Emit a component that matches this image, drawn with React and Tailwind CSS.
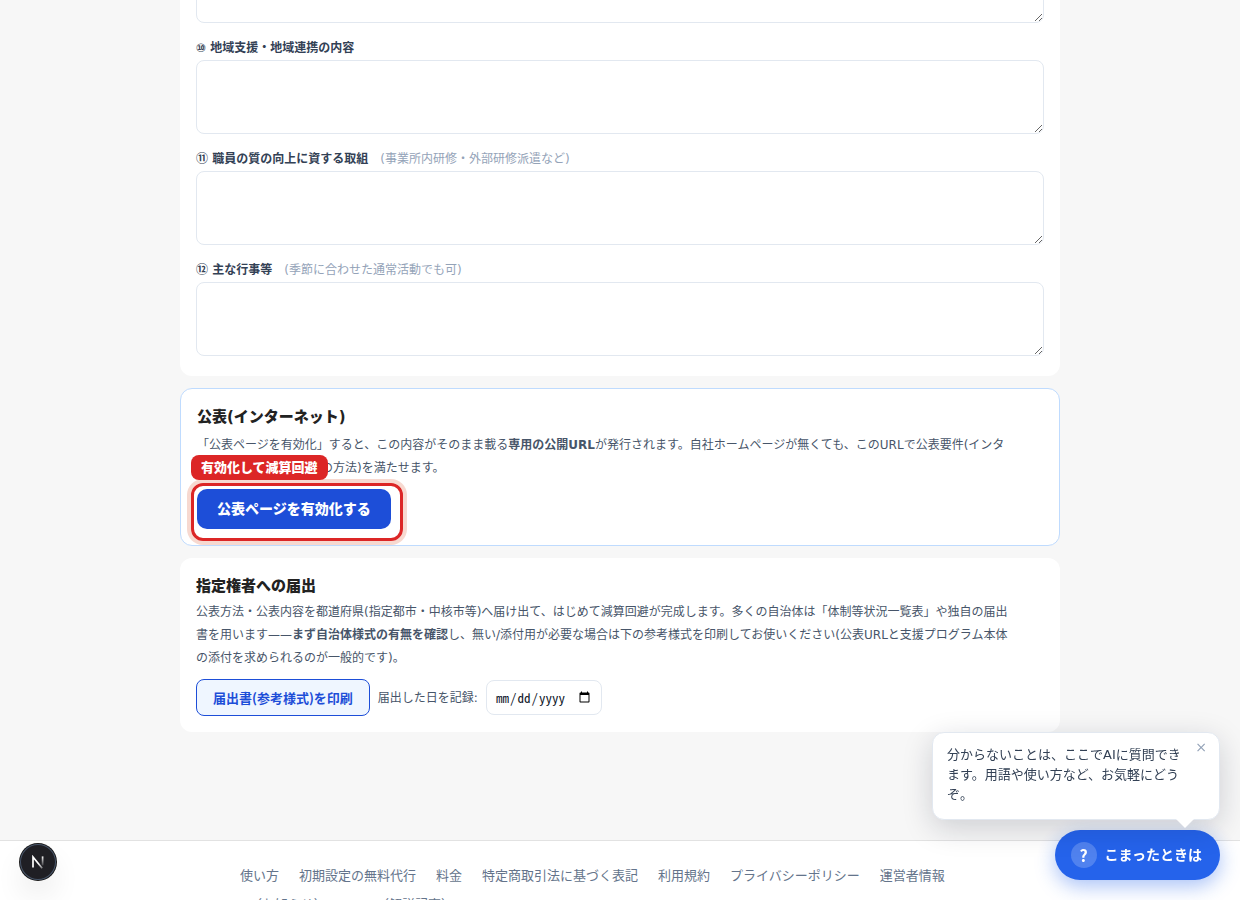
const fields = [
  { id: "f10", no: "⑩", title: "地域支援・地域連携の内容" },
  { id: "f11", no: "⑪", title: "職員の質の向上に資する取組", hint: "(事業所内研修・外部研修派遣など)" },
  { id: "f12", no: "⑫", title: "主な行事等", hint: "(季節に合わせた通常活動でも可)" },
];

const links = [
  "使い方",
  "初期設定の無料代行",
  "料金",
  "特定商取引法に基づく表記",
  "利用規約",
  "プライバシーポリシー",
  "運営者情報",
  "X（お知らせ）",
  "note（解説記事）",
];

function TextArea(props) {
  return (
    <textarea
      {...props}
      className="block h-[74px] w-full resize-y rounded-lg border border-[#e2e8f0] bg-white px-3 py-2 text-sm"
    />
  );
}

function Field({ id, no, title, hint }) {
  return (
    <div className="flex flex-col">
      <label htmlFor={id} className="mb-0.5 text-xs leading-5 font-bold text-[#334155]">
        {no} {title}
        {hint && <span className="font-normal text-[#94a3b8]">{"　"}{hint}</span>}
      </label>
      <TextArea id={id} />
    </div>
  );
}

function NextBadge() {
  return (
    <button
      type="button"
      aria-label="開発ツール"
      className="fixed bottom-5 left-5 flex size-9 items-center justify-center rounded-full bg-[#1f1f24] shadow-[0_0_0_1px_#171717,inset_0_0_0_1px_#475569,0_16px_32px_-8px_rgba(0,0,0,0.24)]"
    >
      <svg width="14" height="14" viewBox="0 0 14 14" fill="none" aria-hidden="true">
        <defs>
          <linearGradient id="diag" x1="8" y1="8" x2="12.5" y2="13.5" gradientUnits="userSpaceOnUse">
            <stop stopColor="#fff" />
            <stop offset="1" stopColor="#fff" stopOpacity="0.3" />
          </linearGradient>
          <linearGradient id="stem" x1="11" y1="1" x2="11" y2="11" gradientUnits="userSpaceOnUse">
            <stop stopColor="#fff" />
            <stop offset="1" stopColor="#fff" stopOpacity="0.1" />
          </linearGradient>
        </defs>
        <path d="M2 12.5V2L11.2 13.2" stroke="url(#diag)" strokeWidth="1.7" />
        <path d="M11.6 1.4V10.4" stroke="url(#stem)" strokeWidth="1.7" />
      </svg>
    </button>
  );
}

function HelpWidget() {
  return (
    <div className="fixed right-5 bottom-5 flex flex-col items-end gap-2.5">
      <div className="relative w-72 rounded-xl border border-[#e2e8f0] bg-white pt-3 pr-9 pb-3.5 pl-3.5 shadow-[0_8px_30px_rgba(15,23,42,0.18)]">
        <p className="text-[13px] leading-5 text-[#334155]">
          分からないことは、ここでAIに質問できます。用語や使い方など、お気軽にどうぞ。
        </p>
        <button
          type="button"
          aria-label="閉じる"
          className="absolute top-1 right-2 flex size-5 items-center justify-center text-sm text-[#94a3b8]"
        >
          ×
        </button>
        <svg className="absolute right-6 -bottom-[9px]" width="20" height="10" viewBox="0 0 20 10" aria-hidden="true">
          <path d="M0 0H20L10 10Z" fill="#fff" />
        </svg>
      </div>
      <button
        type="button"
        className="flex h-[50px] items-center gap-2 rounded-full bg-[#2563eb] pr-[18px] pl-4 text-sm font-bold text-white shadow-[0_6px_20px_rgba(37,99,235,0.4)]"
      >
        <span className="flex size-[26px] items-center justify-center rounded-full bg-white/20 font-['Noto_Sans_CJK_JP'] text-base leading-5">
          ?
        </span>
        こまったときは
      </button>
    </div>
  );
}

export default function App() {
  return (
    <div
      lang="ja"
      className="flex h-screen flex-col justify-start overflow-hidden bg-[#f7f7f7] font-['DejaVu_Sans','Noto_Sans_CJK_JP',sans-serif] text-[#0f172a]"
    >
      <main className="mx-auto flex w-full max-w-[880px] flex-col gap-3 pb-[108px]">
        <section className="-mt-[51px] flex flex-col gap-[15px] rounded-xl bg-white px-4 pb-5">
          <TextArea aria-label="⑨" />
          {fields.map((f) => (
            <Field key={f.id} {...f} />
          ))}
        </section>

        <section className="rounded-xl border border-[#bfdbfe] bg-white p-4">
          <h2 className="text-[15px] leading-6 font-extrabold text-[#222222]">公表(インターネット)</h2>
          <p className="mt-[5px] max-w-[814px] text-xs leading-[23px] text-[#475569]">
            「公表ページを有効化」すると、この内容がそのまま載る<b>専用の公開URL</b>
            が発行されます。自社ホームページが無くても、このURLで公表要件(インターネットの利用/その他の方法)を満たせます。
          </p>
          <div className="relative mt-[9px] w-fit">
            <button
              type="button"
              className="h-10 rounded-[10px] bg-[#1d4ed8] px-5 text-sm font-extrabold text-white"
            >
              公表ページを有効化する
            </button>
            <div className="pointer-events-none absolute -top-1.5 -right-3 -bottom-3 -left-1.5 rounded-xl border-3 border-[#dc2626] shadow-[0_0_0_4px_rgba(220,80,40,0.22)]" />
            <span className="absolute bottom-full -left-1.5 mb-[9px] rounded-lg bg-[#dc2626] px-2.5 text-[13px] leading-[25px] font-extrabold whitespace-nowrap text-white">
              有効化して減算回避
            </span>
          </div>
        </section>

        <section className="rounded-xl bg-white p-4">
          <h2 className="text-[15px] leading-6 font-extrabold text-[#222222]">指定権者への届出</h2>
          <p className="mt-[3px] max-w-[814px] text-xs leading-[23px] text-[#475569]">
            公表方法・公表内容を都道府県(指定都市・中核市等)へ届け出て、はじめて減算回避が完成します。多くの自治体は「体制等状況一覧表」や独自の届出書を用います——
            <b>まず自治体様式の有無を確認</b>
            し、無い/添付用が必要な場合は下の参考様式を印刷してお使いください(公表URLと支援プログラム本体の添付を求められるのが一般的です)。
          </p>
          <div className="mt-[9px] flex flex-wrap items-center gap-2">
            <button
              type="button"
              className="h-[37px] rounded-lg border border-[#1d4ed8] bg-[#eff6ff] px-4 font-['Noto_Sans_CJK_JP'] text-[13px] font-bold text-[#1d4ed8]"
            >
              届出書(参考様式)を印刷
            </button>
            <label htmlFor="filed" className="text-xs text-[#475569]">
              届出した日を記録:
            </label>
            <input
              id="filed"
              type="date"
              className="h-[35px] w-[116px] rounded-lg border border-[#e2e8f0] bg-white px-2 font-['Noto_Sans_Mono_CJK_JP',monospace] text-[13px]"
            />
          </div>
        </section>
      </main>

      <footer className="border-t border-[#e2e2e2] bg-white">
        <nav className="mx-auto flex max-w-[760px] flex-wrap gap-x-5 gap-y-[9px] pt-[25px] text-[13px] leading-5 text-[#64748b]">
          {links.map((l) => (
            <a key={l} href="#">
              {l}
            </a>
          ))}
        </nav>
      </footer>

      <NextBadge />
      <HelpWidget />
    </div>
  );
}
